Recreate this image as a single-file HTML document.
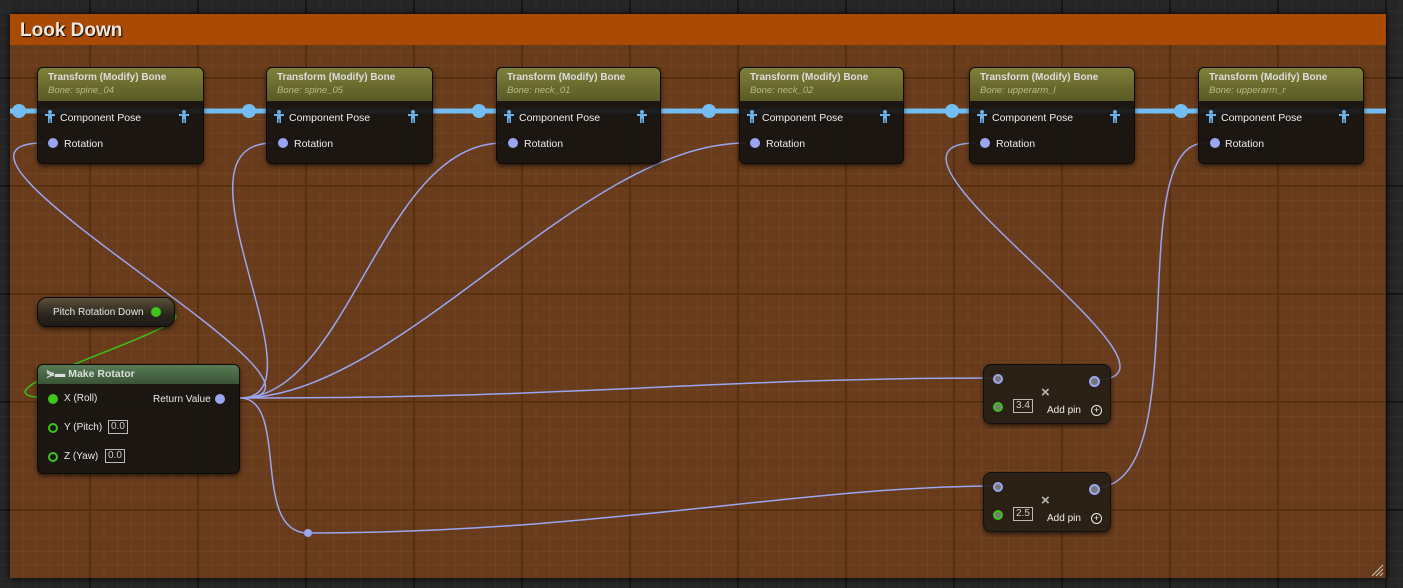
<!DOCTYPE html>
<html><head><meta charset="utf-8"><style>
*{margin:0;padding:0;box-sizing:border-box}
body{width:1403px;height:588px;overflow:hidden;position:relative;font-family:"Liberation Sans",sans-serif;
background-color:#262626;
background-image:
linear-gradient(90deg,#151515 2px,transparent 2px),
linear-gradient(0deg,#151515 2px,transparent 2px),
linear-gradient(90deg,#2d2d2d 1px,transparent 1px),
linear-gradient(0deg,#2d2d2d 1px,transparent 1px);
background-size:108px 108px,108px 108px,13.5px 13.5px,13.5px 13.5px;
background-position:89px 0,0 79px,9px 0,0 12px}
.box{position:absolute;left:10px;top:14px;width:1376px;height:564px;
background-color:#673b1b;
background-image:
linear-gradient(90deg,#56300f 2px,transparent 2px),
linear-gradient(0deg,#56300f 2px,transparent 2px),
linear-gradient(90deg,#71431f 1px,transparent 1px),
linear-gradient(0deg,#71431f 1px,transparent 1px);
background-size:108px 108px,108px 108px,13.5px 13.5px,13.5px 13.5px;
background-position:79px 0,0 65px,-1px 0,0 -2px;box-shadow:0 0 6px #000}
.hdr{position:absolute;left:10px;top:14px;width:1376px;height:31px;background:#a84a04;color:#f0e6dc;font-weight:bold;font-size:19px;padding:6px 10px;text-shadow:1px 1px 1px #000}
.node{position:absolute;background:rgba(22,20,17,0.94);border:1px solid #0b0b0b;border-radius:6px;box-shadow:0 2px 4px rgba(0,0,0,.6);color:#e8e8e8;font-size:10px}
.nh{height:33px;border-radius:5px 5px 0 0;background:linear-gradient(180deg,#80803c,#6a6a2e 55%,#5a5a26);padding:4px 10px;font-weight:bold;color:#ddd}
.nh i{display:block;font-weight:normal;color:#b8b98a;font-size:9.5px;margin-top:2px}
.pb{position:absolute;background:rgba(38,30,22,0.92);border:1px solid #111;border-radius:8px;box-shadow:0 2px 4px rgba(0,0,0,.6);color:#eee;font-size:10px}
.inb{position:absolute;border:1px solid #bbb;color:#ccc;font-size:10px;padding:0 2px;height:14px;line-height:12px}
svg{position:absolute;left:0;top:0}
</style></head><body>
<div class="box"></div>
<div class="hdr">Look Down</div>
<svg width="1403" height="588">
<line x1="10" y1="111" x2="1386" y2="111" stroke="#74bdf2" stroke-width="5"/>
<g fill="#74bdf2"><circle cx="19" cy="111" r="7"/><circle cx="249" cy="111" r="7"/><circle cx="479" cy="111" r="7"/><circle cx="709" cy="111" r="7"/><circle cx="952" cy="111" r="7"/><circle cx="1181" cy="111" r="7"/></g>
<g fill="none" stroke="#9aa6f2" stroke-width="1.5">
<path d="M240 398 C380 398 -110 143 44 143"/>
<path d="M240 398 C330 398 160 143 273 143"/>
<path d="M240 398 C350 398 380 143 503 143"/>
<path d="M240 398 C400 398 580 143 746 143"/>
<path d="M240 398 C600 398 700 378 998 378"/>
<path d="M240 398 C290 398 250 533 308 533 C600 533 800 486 998 486"/>
<path d="M1094 380 C1220 380 840 143 976 143"/>
<path d="M1094 488 C1200 488 1120 143 1205 143"/>
</g>
<circle cx="308" cy="533" r="4" fill="#9aa6f2"/>
<path d="M155 312 C260 312 -70 398 53 398" fill="none" stroke="#3cc21a" stroke-width="1.5"/>
</svg>

<div class="node" style="left:37px;top:67px;width:167px;height:97px"><div class="nh">Transform (Modify) Bone<i>Bone: spine_04</i></div></div>
<div class="node" style="left:266px;top:67px;width:167px;height:97px"><div class="nh">Transform (Modify) Bone<i>Bone: spine_05</i></div></div>
<div class="node" style="left:496px;top:67px;width:165px;height:97px"><div class="nh">Transform (Modify) Bone<i>Bone: neck_01</i></div></div>
<div class="node" style="left:739px;top:67px;width:165px;height:97px"><div class="nh">Transform (Modify) Bone<i>Bone: neck_02</i></div></div>
<div class="node" style="left:969px;top:67px;width:166px;height:97px"><div class="nh">Transform (Modify) Bone<i>Bone: upperarm_l</i></div></div>
<div class="node" style="left:1198px;top:67px;width:166px;height:97px"><div class="nh">Transform (Modify) Bone<i>Bone: upperarm_r</i></div></div>

<svg width="1403" height="588">
<defs><g id="m" fill="#6cb0e8"><circle cx="5" cy="2" r="2"/><rect x="0" y="4" width="10" height="2"/><rect x="3" y="4" width="4" height="5"/><rect x="3" y="8" width="1.6" height="5"/><rect x="5.4" y="8" width="1.6" height="5"/></g></defs>
<g>
<use href="#m" x="45" y="110"/><use href="#m" x="179" y="110"/>
<use href="#m" x="274" y="110"/><use href="#m" x="408" y="110"/>
<use href="#m" x="504" y="110"/><use href="#m" x="637" y="110"/>
<use href="#m" x="747" y="110"/><use href="#m" x="880" y="110"/>
<use href="#m" x="977" y="110"/><use href="#m" x="1110" y="110"/>
<use href="#m" x="1206" y="110"/><use href="#m" x="1339" y="110"/>
</g>
<g fill="#9aa6f2">
<circle cx="53" cy="143" r="5"/><circle cx="283" cy="143" r="5"/><circle cx="513" cy="143" r="5"/><circle cx="755" cy="143" r="5"/><circle cx="985" cy="143" r="5"/><circle cx="1215" cy="143" r="5"/>
</g>
<g fill="#eee" font-size="10.5" font-family="Liberation Sans,sans-serif">
<text x="60" y="121">Component Pose</text><text x="64" y="147">Rotation</text>
<text x="289" y="121">Component Pose</text><text x="294" y="147">Rotation</text>
<text x="519" y="121">Component Pose</text><text x="524" y="147">Rotation</text>
<text x="762" y="121">Component Pose</text><text x="766" y="147">Rotation</text>
<text x="992" y="121">Component Pose</text><text x="996" y="147">Rotation</text>
<text x="1221" y="121">Component Pose</text><text x="1225" y="147">Rotation</text>
</g>
</svg>

<div class="node" style="left:37px;top:297px;width:138px;height:30px;border-radius:10px;background:linear-gradient(180deg,#5a4f3a,#2a251d 60%,#1e1b16)"><span style="position:absolute;left:15px;top:9px;font-size:10px">Pitch Rotation Down</span><div style="position:absolute;left:113px;top:9px;width:10px;height:10px;border-radius:50%;background:#3ec41a"></div></div>

<div class="node" style="left:37px;top:364px;width:203px;height:110px">
<div style="height:19px;border-radius:5px 5px 0 0;background:linear-gradient(180deg,#587c55,#3a5236);padding:3px 8px;font-weight:bold;color:#ddd;font-size:10.5px">⋟▬ Make Rotator</div>
<div style="position:absolute;left:10px;top:29px;width:10px;height:10px;border-radius:50%;background:#3ec41a"></div>
<span style="position:absolute;left:26px;top:28px">X (Roll)</span>
<span style="position:absolute;left:115px;top:29px">Return Value</span>
<div style="position:absolute;left:177px;top:29px;width:10px;height:10px;border-radius:50%;background:#9aa6f2"></div>
<div style="position:absolute;left:10px;top:58px;width:10px;height:10px;border-radius:50%;border:2px solid #3ec41a"></div>
<span style="position:absolute;left:26px;top:57px">Y (Pitch)</span><div class="inb" style="left:70px;top:55px">0.0</div>
<div style="position:absolute;left:10px;top:87px;width:10px;height:10px;border-radius:50%;border:2px solid #3ec41a"></div>
<span style="position:absolute;left:26px;top:86px">Z (Yaw)</span><div class="inb" style="left:67px;top:84px">0.0</div>
</div>

<div class="pb" style="left:983px;top:364px;width:128px;height:60px">
<div style="position:absolute;left:9px;top:9px;width:10px;height:10px;border-radius:50%;background:#777;border:2px solid #9aa6f2"></div>
<div style="position:absolute;left:105px;top:11px;width:11px;height:11px;border-radius:50%;background:#777;border:2px solid #9aa6f2"></div>
<div style="position:absolute;left:57px;top:19px;color:#bbb;font-size:15px;font-weight:bold">×</div>
<div style="position:absolute;left:9px;top:37px;width:10px;height:10px;border-radius:50%;background:#777;border:2px solid #3ec41a"></div>
<div class="inb" style="left:29px;top:34px">3.4</div>
<span style="position:absolute;left:63px;top:40px">Add pin</span>
<div style="position:absolute;left:107px;top:40px;width:11px;height:11px;border-radius:50%;border:1.5px solid #eee;font-size:9px;line-height:8px;text-align:center">+</div>
</div>
<div class="pb" style="left:983px;top:472px;width:128px;height:60px">
<div style="position:absolute;left:9px;top:9px;width:10px;height:10px;border-radius:50%;background:#777;border:2px solid #9aa6f2"></div>
<div style="position:absolute;left:105px;top:11px;width:11px;height:11px;border-radius:50%;background:#777;border:2px solid #9aa6f2"></div>
<div style="position:absolute;left:57px;top:19px;color:#bbb;font-size:15px;font-weight:bold">×</div>
<div style="position:absolute;left:9px;top:37px;width:10px;height:10px;border-radius:50%;background:#777;border:2px solid #3ec41a"></div>
<div class="inb" style="left:29px;top:34px">2.5</div>
<span style="position:absolute;left:63px;top:40px">Add pin</span>
<div style="position:absolute;left:107px;top:40px;width:11px;height:11px;border-radius:50%;border:1.5px solid #eee;font-size:9px;line-height:8px;text-align:center">+</div>
</div>
<svg width="1403" height="588"><g stroke="#ccc" stroke-width="1"><line x1="1372" y1="576" x2="1383" y2="565"/><line x1="1376" y1="576" x2="1383" y2="569"/><line x1="1380" y1="576" x2="1383" y2="573"/></g></svg>
</body></html>
